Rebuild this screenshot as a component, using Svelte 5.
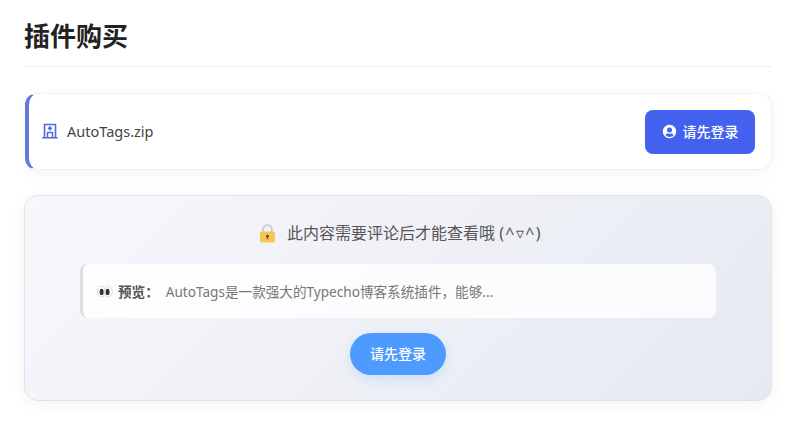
<script>
  const preview = 'AutoTags是一款强大的Typecho博客系统插件\uFF0C能够...';
</script>

<div class="page">
  <h1>插件购买</h1>

  <section class="file">
    <div class="name">
      <svg class="ficon" viewBox="0 0 16 16" aria-hidden="true">
        <path d="M2.500 14.500V1.500h11v13M0.300 14.800h15.400" fill="none" stroke="#5068dc" stroke-width="1.600"/>
        <path d="M8 3.300v4.200M5.900 5.300h4.200" fill="none" stroke="#5068dc" stroke-width="1.700"/>
        <path d="M5.500 14.500V9.400h5v5.100" fill="none" stroke="#5068dc" stroke-width="1.500"/>
      </svg>
      <span>AutoTags.zip</span>
    </div>
    <button class="login">
      <svg viewBox="0 0 16 16" aria-hidden="true">
        <path fill-rule="evenodd" fill="#fff" d="M8 .8a7.200 7.200 0 1 0 0 14.400A7.200 7.200 0 0 0 8 .8zm0 2.900a2.700 2.700 0 1 1 0 5.400 2.700 2.700 0 0 1 0-5.400zm0 10.100a5.700 5.700 0 0 1-4.400-2.100c.6-1.100 1.700-1.700 2.900-1.700.5 0 1 .3 1.500.3s1-.3 1.500-.3c1.200 0 2.300.6 2.900 1.700A5.700 5.700 0 0 1 8 13.800z"/>
      </svg>
      <span>请先登录</span>
    </button>
  </section>

  <section class="gate">
    <div class="msg">
      <svg class="lock" viewBox="0 0 18 20" aria-hidden="true">
        <path d="M4.500 9V5.500a4.500 4.500 0 0 1 9 0V9" fill="none" stroke="#c9ced6" stroke-width="2"/>
        <rect x="1" y="8" width="16" height="11.500" rx="2" fill="#f8c455"/>
        <circle cx="9" cy="12.800" r="1.400" fill="#5b4a2a"/>
        <rect x="8.400" y="13" width="1.200" height="3" fill="#5b4a2a"/>
      </svg>
      <span>此内容需要评论后才能查看哦 <span class="face">(^▿^)</span></span>
    </div>
    <div class="preview">
      <svg class="eyes" viewBox="0 0 16 12" aria-hidden="true">
        <ellipse cx="4.500" cy="6" rx="3.800" ry="5.400" fill="#fff" stroke="#cfd1d8" stroke-width=".8"/>
        <ellipse cx="11.500" cy="6" rx="3.800" ry="5.400" fill="#fff" stroke="#cfd1d8" stroke-width=".8"/>
        <ellipse cx="4.600" cy="6.400" rx="2" ry="3.200" fill="#33353b"/>
        <ellipse cx="10.600" cy="6.400" rx="2" ry="3.200" fill="#33353b"/>
      </svg>
      <strong>预览&#xFF1A;</strong>
      <span class="ptext">{preview}</span>
    </div>
    <button class="pill">请先登录</button>
  </section>
</div>

<style>
  :global(body) {
    margin: 0;
    background: #fff;
    font-family: "Noto Sans", "Noto Sans CJK SC", sans-serif;
  }
  .page {
    padding: 0 34px 0 24px;
    box-sizing: border-box;
    width: 806px;
    height: 436px;
    overflow: hidden;
  }
  h1 {
    margin: 0;
    padding: 18px 0 11px;
    font-size: 26px;
    line-height: 37px;
    font-weight: 700;
    color: #222;
    border-bottom: 1px solid #eee;
  }
  .file {
    margin: 26px 0 0 1px;
    height: 77px;
    box-sizing: border-box;
    display: flex;
    align-items: center;
    justify-content: space-between;
    padding: 0 16px 0 13px;
    background: #fff;
    border: 1px solid #f2f2f4;
    border-left: 4px solid #6478e0;
    border-radius: 12px;
    box-shadow: 0 4px 16px rgba(0, 0, 0, 0.04);
  }
  .name {
    display: flex;
    align-items: center;
    gap: 9px;
    font-size: 14.500px;
    color: #444;
    margin-top: -2px;
  }
  .ficon { width: 16px; height: 16px; }
  .login {
    width: 110px;
    height: 44px;
    border: 0;
    border-radius: 8px;
    background: #4361ee;
    color: #fff;
    font: inherit;
    font-size: 14px;
    font-weight: 500;
    display: flex;
    align-items: center;
    justify-content: center;
    gap: 6px;
    padding: 0;
  }
  .login span { margin-top: -2px; }
  .login svg { width: 15px; height: 15px; }
  .gate {
    margin-top: 25px;
    height: 206px;
    box-sizing: border-box;
    border: 1px solid #e1e3e8;
    border-radius: 14px;
    background: linear-gradient(135deg, #f7f8fc 0%, #e6e9f1 100%);
    box-shadow: 0 4px 16px rgba(0, 0, 0, 0.05);
    display: flex;
    flex-direction: column;
    align-items: center;
    padding-top: 24px;
  }
  .msg {
    display: flex;
    align-items: center;
    gap: 11px;
    height: 26px;
    font-size: 16px;
    color: #555;
    margin-left: 5px;
  }
  .msg > span { margin-top: -2px; }
  .face { letter-spacing: 1.400px; }
  .lock { width: 17px; height: 19px; }
  .preview {
    align-self: stretch;
    margin: 18px 55px 0 55px;
    height: 54px;
    box-sizing: border-box;
    display: flex;
    align-items: center;
    padding-left: 14px;
    background: rgba(255, 255, 255, 0.8);
    border-left: 3px solid #dcdee3;
    border-radius: 8px;
    font-size: 13.600px;
    color: #777;
  }
  .eyes { width: 16px; height: 13px; margin-right: 5px; }
  strong { color: #555; font-weight: 700; margin-right: 7px; }
  .pill {
    margin-top: 15px;
    width: 96px;
    height: 42px;
    border: 0;
    border-radius: 21px;
    background: #4d9bff;
    color: #fff;
    font: inherit;
    font-size: 14px;
    font-weight: 500;
    padding: 0 0 3px;
    box-shadow: 0 4px 12px rgba(77, 155, 255, 0.2);
  }
</style>
